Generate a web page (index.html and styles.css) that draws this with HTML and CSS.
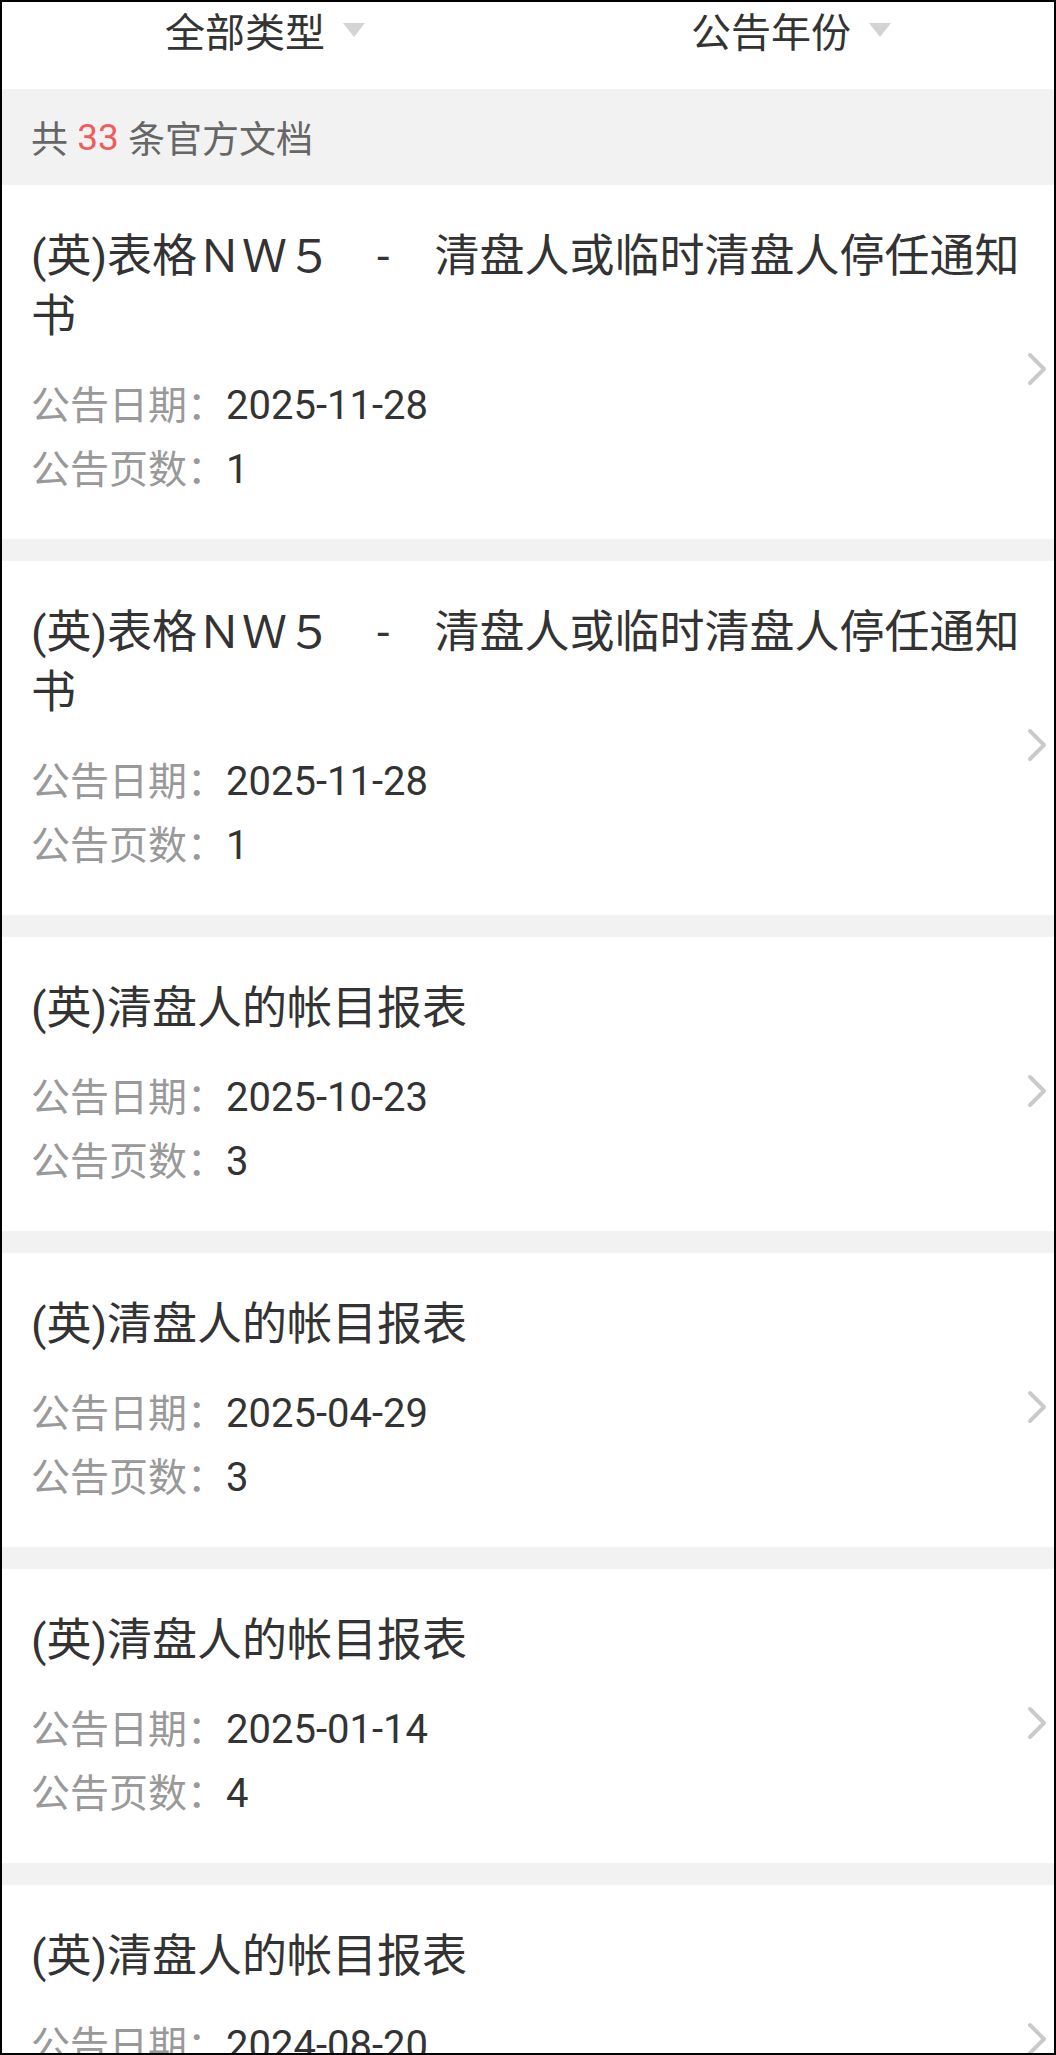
FILE: index.html
```html
<!DOCTYPE html>
<html lang="zh-CN">

<head>
    <meta charset="UTF-8">
    <meta name="viewport" content="width=device-width, initial-scale=1.0">
    <title>官方文档</title>
    <link rel="stylesheet" href="styles.css">
</head>

<body>
    <div class="screen">
        <div class="tabs">
            <div class="tab"><span>全部类型</span><i class="tab-arrow"></i></div>
            <div class="tab"><span>公告年份</span><i class="tab-arrow"></i></div>
        </div>

        <div class="summary">共 <span class="count">33</span> 条官方文档</div>

        <div class="doc-list">
            <div class="doc">
                <div class="doc-title">(英)表格ＮＷ５　-　清盘人或临时清盘人停任通知书</div>
                <div class="doc-meta"><span class="label">公告日期：</span>2025-11-28</div>
                <div class="doc-meta"><span class="label">公告页数：</span>1</div>
                <svg class="chevron" viewBox="0 0 20 34"><polyline points="3,3 17,17 3,31" /></svg>
            </div>
            <div class="doc">
                <div class="doc-title">(英)表格ＮＷ５　-　清盘人或临时清盘人停任通知书</div>
                <div class="doc-meta"><span class="label">公告日期：</span>2025-11-28</div>
                <div class="doc-meta"><span class="label">公告页数：</span>1</div>
                <svg class="chevron" viewBox="0 0 20 34"><polyline points="3,3 17,17 3,31" /></svg>
            </div>
            <div class="doc">
                <div class="doc-title">(英)清盘人的帐目报表</div>
                <div class="doc-meta"><span class="label">公告日期：</span>2025-10-23</div>
                <div class="doc-meta"><span class="label">公告页数：</span>3</div>
                <svg class="chevron" viewBox="0 0 20 34"><polyline points="3,3 17,17 3,31" /></svg>
            </div>
            <div class="doc">
                <div class="doc-title">(英)清盘人的帐目报表</div>
                <div class="doc-meta"><span class="label">公告日期：</span>2025-04-29</div>
                <div class="doc-meta"><span class="label">公告页数：</span>3</div>
                <svg class="chevron" viewBox="0 0 20 34"><polyline points="3,3 17,17 3,31" /></svg>
            </div>
            <div class="doc">
                <div class="doc-title">(英)清盘人的帐目报表</div>
                <div class="doc-meta"><span class="label">公告日期：</span>2025-01-14</div>
                <div class="doc-meta"><span class="label">公告页数：</span>4</div>
                <svg class="chevron" viewBox="0 0 20 34"><polyline points="3,3 17,17 3,31" /></svg>
            </div>
            <div class="doc">
                <div class="doc-title">(英)清盘人的帐目报表</div>
                <div class="doc-meta"><span class="label">公告日期：</span>2024-08-20</div>
                <div class="doc-meta"><span class="label">公告页数：</span>2</div>
                <svg class="chevron" viewBox="0 0 20 34"><polyline points="3,3 17,17 3,31" /></svg>
            </div>
        </div>
    </div>
</body>

</html>
```

FILE: styles.css
```css
body {
    margin: 0;
    padding: 0;
    font-family: Roboto, "Noto Sans CJK SC", sans-serif;
    background-color: #fff;
}

.screen {
    width: 1056px;
    height: 2055px;
    box-sizing: border-box;
    border: 2px solid #000;
    overflow: hidden;
    background-color: #f2f2f2;
}

.tabs {
    display: flex;
    height: 87px;
    background-color: #fff;
}

.tab {
    flex: 1;
    display: flex;
    justify-content: center;
    align-items: center;
    gap: 18px;
    height: 56px;
    font-size: 40px;
    color: #333;
}

.tab-arrow {
    width: 0;
    height: 0;
    border-left: 11px solid transparent;
    border-right: 11px solid transparent;
    border-top: 14px solid #d4d4d4;
}

.summary {
    height: 96px;
    display: flex;
    align-items: center;
    padding-left: 29px;
    font-size: 37px;
    color: #666;
    white-space: pre;
}

.count {
    color: #f25b5b;
}

.doc-list {
    display: flex;
    flex-direction: column;
    gap: 22px;
}

.doc {
    position: relative;
    padding: 42px 12px 37px 29px;
    background-color: #fff;
}

.doc-title {
    font-size: 45px;
    line-height: 60px;
    color: #333;
    margin-bottom: 27px;
}

.doc-meta {
    font-size: 40px;
    line-height: 64px;
    color: #333;
}

.doc-meta .label {
    font-size: 39px;
    color: #999;
}

.chevron {
    position: absolute;
    right: 7px;
    top: 50%;
    width: 20px;
    height: 34px;
    margin-top: -10px;
    fill: none;
    stroke: #cacaca;
    stroke-width: 4;
    stroke-linecap: round;
    stroke-linejoin: round;
}
```
